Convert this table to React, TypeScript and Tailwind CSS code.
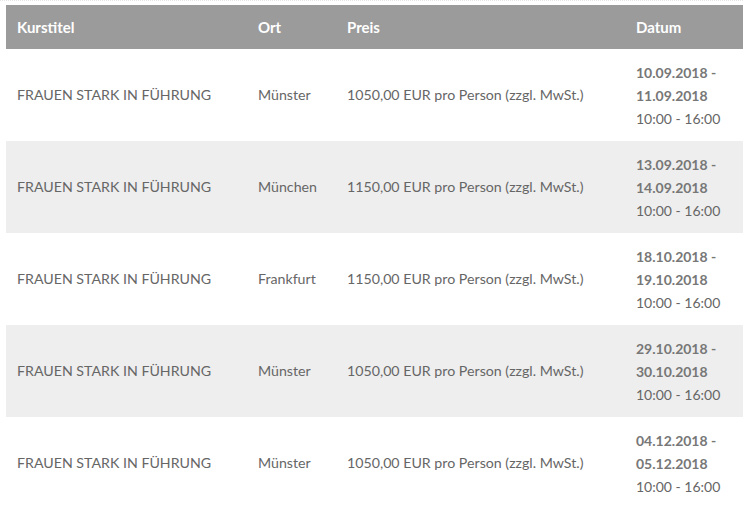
import React from "react";

const rows = [
  { ort: "Münster", preis: "1050,00 EUR pro Person (zzgl. MwSt.)", d1: "10.09.2018 -", d2: "11.09.2018" },
  { ort: "München", preis: "1150,00 EUR pro Person (zzgl. MwSt.)", d1: "13.09.2018 -", d2: "14.09.2018" },
  { ort: "Frankfurt", preis: "1150,00 EUR pro Person (zzgl. MwSt.)", d1: "18.10.2018 -", d2: "19.10.2018" },
  { ort: "Münster", preis: "1050,00 EUR pro Person (zzgl. MwSt.)", d1: "29.10.2018 -", d2: "30.10.2018" },
  { ort: "Münster", preis: "1050,00 EUR pro Person (zzgl. MwSt.)", d1: "04.12.2018 -", d2: "05.12.2018" },
];

export default function App() {
  return (
    <div className="w-[743px] h-[505px] overflow-hidden bg-white font-['Lato',sans-serif] border-t border-dotted border-[#e4e4e4]">
      <div className="pl-[6px] pt-[4px]">
        <div className="w-[760px]">
          <div className="grid grid-cols-[241px_89px_289px_141px] h-[44px] bg-[#9b9b9b] text-white font-bold text-[15px] items-center">
            <div className="pl-[11px]">Kurstitel</div>
            <div className="pl-[11px]">Ort</div>
            <div className="pl-[11px]">Preis</div>
            <div className="pl-[11px]">Datum</div>
          </div>
          {rows.map((r, i) => (
            <div
              key={i}
              className={
                "grid grid-cols-[241px_89px_289px_141px] h-[92px] items-center text-[14.2px] text-[#666666] " +
                (i % 2 === 1 ? "bg-[#eeeeee]" : "bg-white")
              }
            >
              <div className="pl-[11px]">FRAUEN STARK IN FÜHRUNG</div>
              <div className="pl-[11px]">{r.ort}</div>
              <div className="pl-[11px]">{r.preis}</div>
              <div className="pl-[11px] leading-[23px] text-[14px]">
                <div className="font-bold text-[#777777]">{r.d1}</div>
                <div className="font-bold text-[#777777]">{r.d2}</div>
                <div>10:00 - 16:00</div>
              </div>
            </div>
          ))}
        </div>
      </div>
    </div>
  );
}
